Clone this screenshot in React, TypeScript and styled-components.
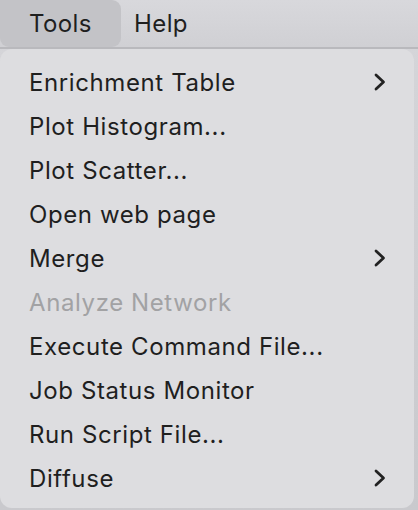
import React from "react";
import styled, { createGlobalStyle } from "styled-components";

const Global = createGlobalStyle`
  html, body { margin: 0; padding: 0; background: #cbcbcf; }
  body { font-family: Inter, "Noto Sans", "Liberation Sans", sans-serif; width: 418px; height: 510px; overflow: hidden; }
`;

const Screen = styled.div`
  width: 418px;
  height: 510px;
  display: flex;
  flex-direction: column;
  background: linear-gradient(#d6d6da, #c9c9cd);
`;

const MenuBar = styled.div`
  height: 47px;
  display: flex;
  align-items: stretch;
  background: linear-gradient(#d8d8dc, #d0d0d4);
  border-bottom: 2px solid #b9b9bd;
`;

const BarItem = styled.div<{ $active?: boolean }>`
  display: flex;
  align-items: center;
  width: ${(p) => (p.$active ? "121px" : "auto")};
  padding: ${(p) => (p.$active ? "0 0 0 29px" : "0 0 0 13px")};
  box-sizing: border-box;
  font-size: 24px;
  letter-spacing: 0.4px;
  color: #1f1f1f;
  background: ${(p) => (p.$active ? "#c3c3c7" : "transparent")};
  border-radius: 0 9px 9px 9px;
`;

const Panel = styled.div`
  width: 414px;
  height: 459px;
  box-sizing: border-box;
  background: #dddde0;
  border-radius: 12px;
  padding: 11px 0 0;
  display: flex;
  flex-direction: column;
`;

const Row = styled.div<{ $disabled?: boolean }>`
  height: 44px;
  display: flex;
  align-items: center;
  justify-content: space-between;
  padding: 0 28px 0 29px;
  font-size: 24px;
  letter-spacing: 0.6px;
  color: ${(p) => (p.$disabled ? "#a2a2a4" : "#1f1f1f")};
`;

const Chevron = () => (
  <svg width="12" height="18" viewBox="0 0 12 18">
    <polyline points="2,2 9.5,9 2,16" fill="none" stroke="#222" strokeWidth="2.8" strokeLinecap="round" strokeLinejoin="round" />
  </svg>
);

const items: { label: string; sub?: boolean; disabled?: boolean }[] = [
  { label: "Enrichment Table", sub: true },
  { label: "Plot Histogram..." },
  { label: "Plot Scatter..." },
  { label: "Open web page" },
  { label: "Merge", sub: true },
  { label: "Analyze Network", disabled: true },
  { label: "Execute Command File..." },
  { label: "Job Status Monitor" },
  { label: "Run Script File..." },
  { label: "Diffuse", sub: true },
];

export default function App() {
  return (
    <Screen>
      <Global />
      <MenuBar>
        <BarItem $active>Tools</BarItem>
        <BarItem>Help</BarItem>
      </MenuBar>
      <Panel>
        {items.map((it) => (
          <Row key={it.label} $disabled={it.disabled}>
            <span>{it.label}</span>
            {it.sub && <Chevron />}
          </Row>
        ))}
      </Panel>
    </Screen>
  );
}
